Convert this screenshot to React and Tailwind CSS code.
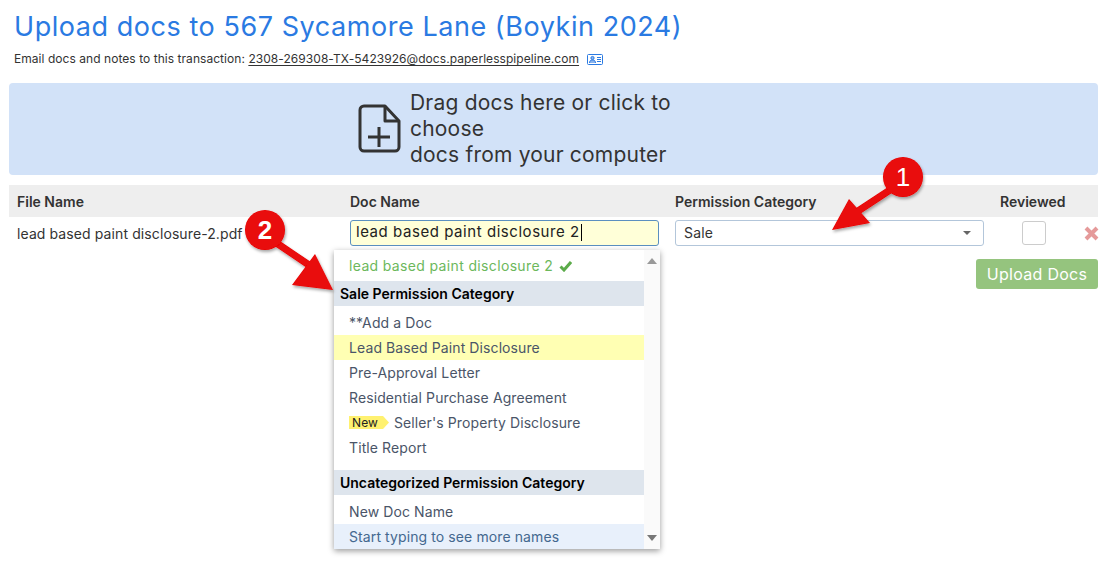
import React from "react";

const font = { fontFamily: '"Inter", "Noto Sans", sans-serif' };

// red annotation: numbered circle with arrow pointing down-left
const Callout = ({ className, num, x1, y1, x2, y2, cx, cy, w, h, tip }) => (
  <svg className={className} width={w} height={h} viewBox={`0 0 ${w} ${h}`}>
    <defs>
      <filter id={`s${num}`} x="-20%" y="-20%" width="140%" height="140%">
        <feDropShadow dx="1" dy="2" stdDeviation="1.5" floodColor="#000" floodOpacity="0.35" />
      </filter>
    </defs>
    <g filter={`url(#s${num})`}>
      <line x1={x1} y1={y1} x2={x2} y2={y2} stroke="#e90707" strokeWidth="7" />
      <polygon points={tip} fill="#e90707" />
      <circle cx={cx} cy={cy} r="20" fill="#e90707" />
    </g>
  </svg>
);

const Item = ({ children, className = "" }) => (
  <div className={`h-[25px] pl-[15px] flex items-center text-[14px] tracking-[0.1px] text-[#4a5568] ${className}`}>
    {children}
  </div>
);

const GroupHead = ({ children }) => (
  <div className="h-[25px] pl-[6px] flex items-center text-[14px] font-semibold text-black bg-[#dee5ed]">
    {children}
  </div>
);

export default function App() {
  return (
    <div className="relative w-[1107px] h-[572px] bg-white overflow-hidden px-[9px]" style={font}>
      <h1 className="pt-[9px] pl-[5px] text-[27px] leading-[36px] tracking-[0.55px] text-[#2a7ae2] font-normal">
        Upload docs to 567 Sycamore Lane (Boykin 2024)
      </h1>
      <div className="mt-[5px] pl-[5px] h-[18px] flex items-center text-[12px] tracking-[0.05px] text-[#333]">
        <span>Email docs and notes to this transaction:&nbsp;</span>
        <span className="underline underline-offset-2">2308-269308-TX-5423926@docs.paperlesspipeline.com</span>
        <svg className="ml-[8px]" width="17" height="13" viewBox="0 0 17 13" fill="none" stroke="#2a7ae2">
          <rect x="0.5" y="1.5" width="15" height="10" rx="1" />
          <circle cx="5.5" cy="5" r="1.6" fill="#8ab4ee" />
          <path d="M2.5 10c0-2 1-3 3-3s3 1 3 3" fill="#8ab4ee" />
          <path d="M10 4.5h4M10 6.5h4M10 8.5h4" />
        </svg>
      </div>

      {/* Drop zone */}
      <div className="mt-[15px] h-[92px] bg-[#d2e2f8] rounded-[4px] flex items-center justify-center text-[#333]">
        <div className="flex items-center mr-[0px]">
          <svg width="44" height="50" viewBox="0 0 44 50" fill="none" stroke="#333" strokeWidth="3" strokeLinejoin="round">
            <path d="M7 2h21l14 15v26a4 4 0 0 1-4 4H7a4 4 0 0 1-4-4V6a4 4 0 0 1 4-4z" />
            <path d="M28 2v15h14" />
            <path d="M22 23v20M11 33h22" />
          </svg>
          <div className="ml-[9px] w-[340px] text-[21px] leading-[26px] tracking-[0.2px]">
            Drag docs here or click to choose
            <br />
            docs from your computer
          </div>
        </div>
      </div>

      {/* Table header */}
      <div className="mt-[10px] h-[32px] bg-[#eeeeee] grid grid-cols-[333px_325px_325px_1fr] pl-[8px] items-center text-[14px] font-semibold text-[#333]">
        <div>File Name</div>
        <div>Doc Name</div>
        <div>Permission Category</div>
        <div>Reviewed</div>
      </div>

      {/* Row */}
      <div className="h-[32px] grid grid-cols-[333px_325px_325px_1fr] pl-[8px] items-center text-[14px] text-[#333]">
        <div className="whitespace-nowrap overflow-hidden tracking-[0.1px]">lead based paint disclosure-2.pdf</div>
        <div className="h-[26px] w-[309px] -mt-[1px] border border-[#5b8fc0] rounded-[3px] bg-[#ffffd8] flex items-center pl-[5px] text-[15px] tracking-[0.55px] text-[#222]">
          lead based paint disclosure 2<span className="ml-[1px] w-px h-[17px] bg-black" />
        </div>
        <div className="h-[26px] w-[309px] -mt-[1px] border border-[#b3c6da] rounded-[3px] flex items-center justify-between pl-[8px] pr-[12px] tracking-[0.2px]">
          Sale
          <span className="w-0 h-0 border-x-[4px] border-x-transparent border-t-[4px] border-t-[#666]" />
        </div>
        <div className="flex items-center">
          <div className="ml-[22px] w-[24px] h-[24px] border border-[#ccc] rounded-[3px] -mt-[1px]" />
          <svg className="ml-[38px]" width="15" height="15" viewBox="0 0 15 15" stroke="#e59a9a" strokeWidth="4">
            <path d="M2 2l11 11M13 2L2 13" />
          </svg>
        </div>
      </div>

      <div className="flex justify-end mt-[10px]">
        <button className="w-[122px] h-[30px] rounded-[3px] bg-[#95c47e] text-white text-[16px] tracking-[0.3px]">
          Upload Docs
        </button>
      </div>

      {/* Autocomplete menu */}
      <div className="absolute left-[334px] top-[250px] w-[326px] h-[299px] bg-white shadow-[0_2px_6px_rgba(0,0,0,0.4)] flex">
        <div className="w-[310px]">
          <div className="h-[31px] pl-[15px] flex items-center text-[14px] tracking-[0.35px] text-[#6cb85c]">
            lead based paint disclosure 2
            <svg className="ml-[6px]" width="13" height="12" viewBox="0 0 13 12" fill="none" stroke="#5cab4a" strokeWidth="3">
              <path d="M1.5 6.5l3.5 3.5 7-8" />
            </svg>
          </div>
          <GroupHead>Sale Permission Category</GroupHead>
          <div className="h-[4px]" />
          <Item>**Add a Doc</Item>
          <Item className="bg-[#ffffb3]">Lead Based Paint Disclosure</Item>
          <Item>Pre-Approval Letter</Item>
          <Item>Residential Purchase Agreement</Item>
          <Item>
            <span
              className="w-[40px] h-[13px] mr-[5px] pl-[3px] bg-[#fff170] text-[12px] leading-[13px] text-[#222] flex items-center"
              style={{ clipPath: "polygon(0 0, 85% 0, 100% 50%, 85% 100%, 0 100%)" }}
            >
              New
            </span>
            Seller's Property Disclosure
          </Item>
          <Item>Title Report</Item>
          <div className="h-[10px]" />
          <GroupHead>Uncategorized Permission Category</GroupHead>
          <div className="h-[4px]" />
          <Item>New Doc Name</Item>
          <Item className="bg-[#e8f0fb] text-[#44688f]">Start typing to see more names</Item>
        </div>
        <div className="flex-1 bg-[#fafafa] flex flex-col items-center justify-between pt-[8px] pb-[8px]">
          <span className="w-0 h-0 border-x-[5px] border-x-transparent border-b-[6px] border-b-[#999]" />
          <span className="w-0 h-0 border-x-[5px] border-x-transparent border-t-[6px] border-t-[#777]" />
        </div>
      </div>

      {/* Callouts */}
      <Callout
        className="absolute left-[825px] top-[150px]"
        num="1"
        w={105}
        h={85}
        cx={78}
        cy={27}
        x1={68}
        y1={38}
        x2={30}
        y2={63}
        tip="7,80 45,73 24,49"
      />
      <div className="absolute left-[883px] top-[157px] w-[40px] h-[40px] flex items-center justify-center text-white text-[26px]" style={{ fontFamily: '"Liberation Sans", sans-serif' }}>
        1
      </div>
      <Callout
        className="absolute left-[240px] top-[205px]"
        num="2"
        w={100}
        h={90}
        cx={25}
        cy={25}
        x1={35}
        y1={37}
        x2={72}
        y2={62}
        tip="93,85 52,80 75,49"
      />
      <div className="absolute left-[245px] top-[210px] w-[40px] h-[40px] flex items-center justify-center text-white text-[26px] font-bold" style={{ fontFamily: '"Liberation Sans", sans-serif' }}>
        2
      </div>
    </div>
  );
}
